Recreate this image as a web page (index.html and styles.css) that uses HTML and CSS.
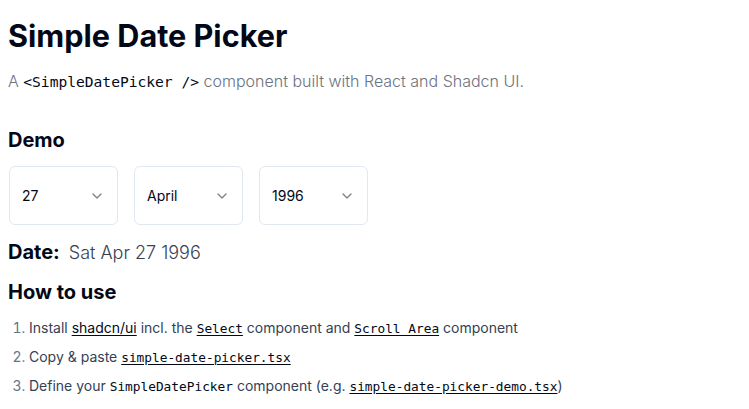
FILE: index.html
```html
<!DOCTYPE html>
<html lang="en">
<head>
<meta charset="utf-8">
<title>Simple Date Picker</title>
<link rel="stylesheet" href="styles.css">
</head>
<body>
<main class="page">
  <h1 class="title">Simple Date Picker</h1>
  <p class="lead">A <code class="code-lead">&lt;SimpleDatePicker /&gt;</code> component built with React and Shadcn UI.</p>

  <h2 class="section">Demo</h2>
  <div class="pickers">
    <button class="select" type="button"><span>27</span><svg class="chev" viewBox="0 0 24 24" width="16" height="16"><path d="m6 9 6 6 6-6"/></svg></button>
    <button class="select" type="button"><span>April</span><svg class="chev" viewBox="0 0 24 24" width="16" height="16"><path d="m6 9 6 6 6-6"/></svg></button>
    <button class="select" type="button"><span>1996</span><svg class="chev" viewBox="0 0 24 24" width="16" height="16"><path d="m6 9 6 6 6-6"/></svg></button>
  </div>

  <div class="date-row">
    <span class="date-label">Date:</span>
    <span class="date-value">Sat Apr 27 1996</span>
  </div>

  <h2 class="section section-how">How to use</h2>
  <ol class="steps">
    <li>Install <a href="#">shadcn/ui</a> incl. the <a href="#" class="mono">Select</a> component and <a href="#" class="mono">Scroll Area</a> component</li>
    <li>Copy &amp; paste <a href="#" class="mono">simple-date-picker.tsx</a></li>
    <li>Define your <code class="mono">SimpleDatePicker</code> component (e.g. <a href="#" class="mono">simple-date-picker-demo.tsx</a>)</li>
  </ol>
</main>
</body>
</html>
```

FILE: styles.css
```css
* { box-sizing: border-box; }
html, body { margin: 0; padding: 0; background: #ffffff; }
body {
  font-family: Inter, "Noto Sans", sans-serif;
  color: #020817;
}
.page {
  padding: 18px 8px 0 8px;
}
.title {
  margin: 0;
  font-size: 30.6px;
  line-height: 36px;
  font-weight: 700;
  color: #020817;
}
.lead {
  margin: 15px 0 0 0;
  font-size: 16px;
  line-height: 24px;
  font-weight: 300;
  color: #6b7280;
}
.code-lead {
  font-family: "DejaVu Sans Mono", "Liberation Mono", monospace;
  font-size: 14.6px;
  color: #020817;
  font-weight: 400;
}
.section {
  margin: 32px 0 0 0;
  font-size: 20px;
  line-height: 28px;
  font-weight: 700;
  color: #020817;
}
.pickers {
  display: flex;
  gap: 16px;
  margin-top: 12px;
  padding-left: 1px;
}
.select {
  width: 109px;
  height: 59px;
  display: flex;
  align-items: center;
  justify-content: space-between;
  padding: 0 12px;
  border: 1px solid #e2e8f0;
  border-radius: 6px;
  background: #ffffff;
  font-family: Inter, sans-serif;
  font-size: 14px;
  line-height: 20px;
  color: #020817;
}
.chev {
  fill: none;
  stroke: #020817;
  stroke-width: 2;
  stroke-linecap: round;
  stroke-linejoin: round;
  opacity: 0.5;
}
.date-row {
  display: flex;
  align-items: baseline;
  gap: 9px;
  margin-top: 13px;
  line-height: 28px;
}
.date-label {
  font-size: 20px;
  font-weight: 700;
  color: #020817;
}
.date-value {
  font-size: 18px;
  font-weight: 300;
  color: #374151;
}
.section-how {
  margin-top: 11px;
}
.steps {
  margin: 12px 0 0 0;
  padding-left: 21px;
  font-size: 14px;
  line-height: 20px;
  color: #334155;
}
.steps li {
  margin-top: 9px;
}
.steps li:first-child { margin-top: 0; }
.steps li::marker { color: #64748b; }
.steps a {
  color: #020817;
  text-decoration: underline;
  text-underline-offset: 2px;
}
.mono {
  font-family: "DejaVu Sans Mono", "Liberation Mono", monospace;
  font-size: 12.8px;
  line-height: 1;
  color: #020817;
}
```
